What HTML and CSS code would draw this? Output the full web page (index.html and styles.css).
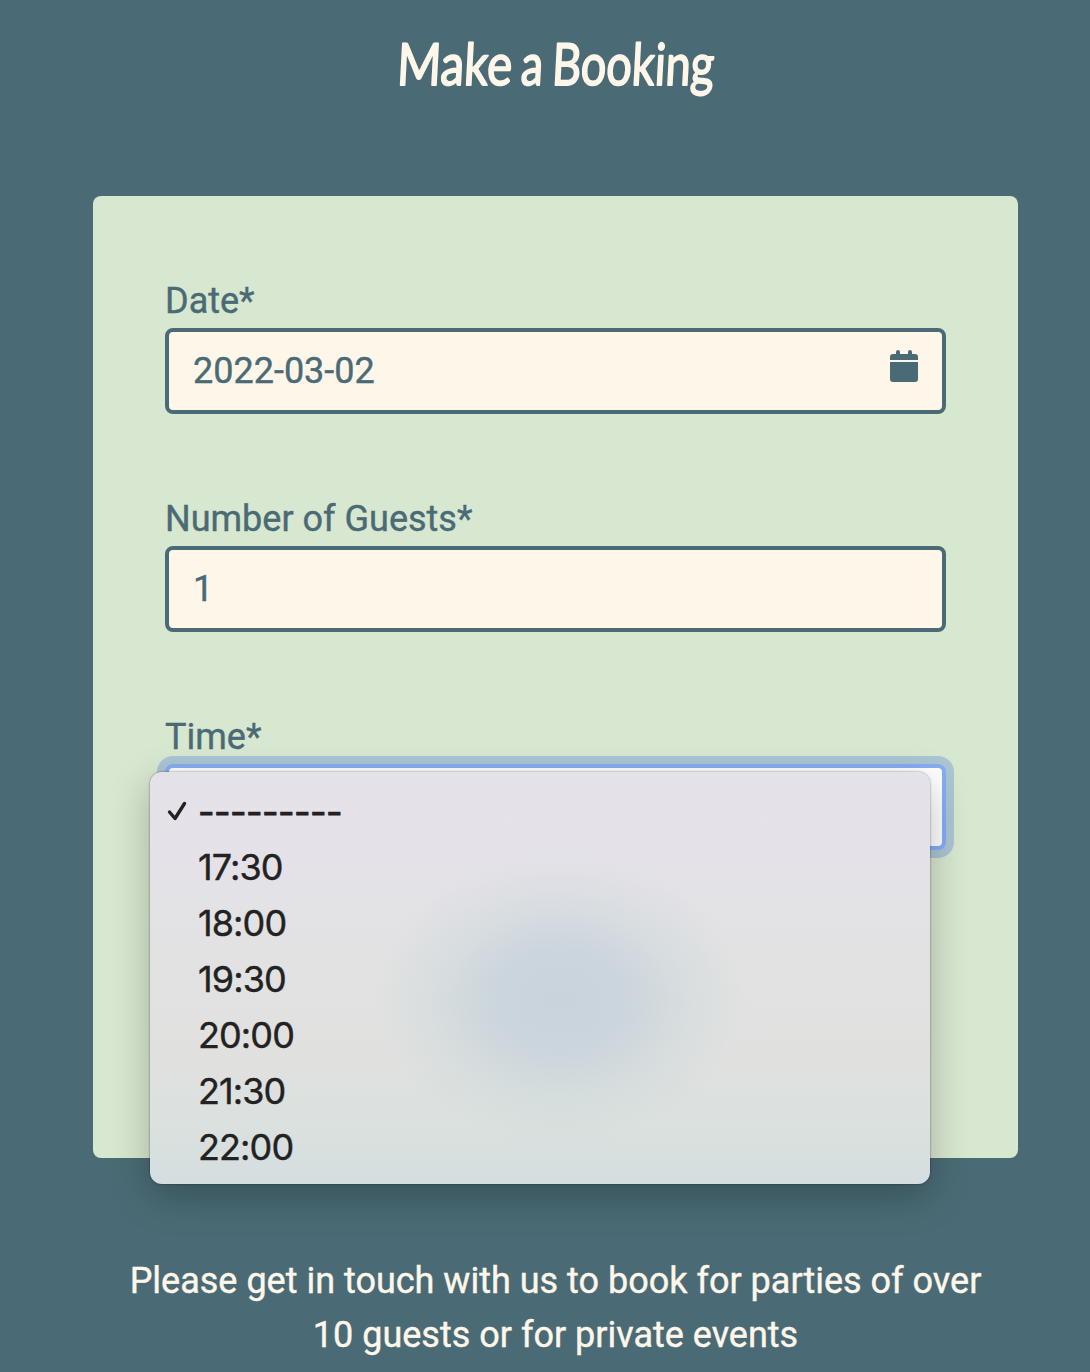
FILE: index.html
```html
<!DOCTYPE html>
<html lang="en">
<head>
<meta charset="utf-8">
<title>Make a Booking</title>
<link rel="stylesheet" href="styles.css">
</head>
<body>
<main class="page">
  <h1 class="title">
    <svg class="title-art" width="330" height="80" viewBox="0 0 330 80">
      <text class="title-text" y="52" transform="skewX(-3)"><tspan x="8" textLength="115" lengthAdjust="spacingAndGlyphs">Make</tspan><tspan x="132" textLength="22" lengthAdjust="spacingAndGlyphs">a</tspan><tspan x="163" textLength="162" lengthAdjust="spacingAndGlyphs">Booking</tspan></text>
    </svg>
  </h1>
  <form class="card">
    <div class="field">
      <label class="label" for="date">Date*</label>
      <div class="control">
        <input class="value" id="date" type="text" value="2022-03-02">
        <svg class="calendar" width="28" height="32" viewBox="0 0 28 32" aria-hidden="true">
          <path d="M0 10V7a3 3 0 0 1 3-3h3V2a2 2 0 0 1 4 0v2h8V2a2 2 0 0 1 4 0v2h3a3 3 0 0 1 3 3v3zM0 12h28v17a3 3 0 0 1-3 3H3a3 3 0 0 1-3-3z"/>
        </svg>
      </div>
    </div>
    <div class="field">
      <label class="label" for="guests">Number of Guests*</label>
      <div class="control"><input class="value" id="guests" type="text" value="1"></div>
    </div>
    <div class="field time-field">
      <span class="label">Time*</span>
      <div class="control focused"></div>
      <ul class="menu">
        <li class="option selected">
          <svg class="check" width="20" height="20" viewBox="0 0 20 20" aria-hidden="true"><path d="M2.5 11l5.5 6.5L17.5 2.5"/></svg>
          <span class="dashes">---------</span>
        </li>
        <li class="option">17:30</li>
        <li class="option">18:00</li>
        <li class="option">19:30</li>
        <li class="option">20:00</li>
        <li class="option">21:30</li>
        <li class="option">22:00</li>
      </ul>
    </div>
  </form>
  <p class="note">Please get in touch with us to book for parties of over<br>10 guests or for private events</p>
</main>
</body>
</html>
```
FILE: styles.css
```css
* {
  box-sizing: border-box;
}

body {
  margin: 0;
  background: #4a6b75;
  color: #fff6ea;
  font: 36px/54px Roboto, sans-serif;
  -webkit-text-stroke: 0.4px;
}

.page {
  height: 1372px;
  padding: 33px 72px 0 93px;
  overflow: hidden;
}

.title {
  display: flex;
  justify-content: center;
  height: 163px;
  margin: 0;
}

.title-art {
  overflow: visible;
}

.title-text {
  font: 400 58px Lato, sans-serif;
  fill: #fff6ea;
  stroke: #fff6ea;
  stroke-width: 1.8px;
  stroke-linejoin: round;
}

.card {
  display: flex;
  flex-direction: column;
  gap: 78px;
  height: 962px;
  padding: 78px 72px;
  border-radius: 8px;
  background: #d8e7d0;
}

.label {
  display: block;
  color: #4a6b75;
}

.control {
  display: flex;
  align-items: center;
  justify-content: space-between;
  height: 86px;
  padding: 0 24px;
  border: 4px solid #4a6b75;
  border-radius: 8px;
  background: #fff6ea;
}

.value {
  flex: 1;
  min-width: 0;
  padding: 0;
  border: 0;
  outline: 0;
  background: none;
  color: #4a6b75;
  font: inherit;
}

.calendar {
  margin-bottom: 10px;
  fill: #4a6b75;
}

.focused {
  border-color: #86aef3;
  background: #fff;
  box-shadow: 0 0 0 8px #abc5d2;
}

.time-field {
  position: relative;
}

/* Open option list, floating over the select and the card edge */
.menu {
  position: absolute;
  top: 62px;
  left: -15px;
  width: 780px;
  height: 412px;
  margin: 0;
  padding: 11px 18px 0 48px;
  border-radius: 12px;
  background:
    radial-gradient(ellipse 185px 145px at 410px 228px, #c8d3db 0%, rgba(200, 211, 220, 0.85) 35%, rgba(205, 216, 220, 0.5) 65%, rgba(212, 224, 220, 0) 100%),
    linear-gradient(#e5e1e9 0%, #e4e2e8 23%, #e1e2e1 52%, #e0e1df 70%, #dae1de 86%, #d4dde0 100%);
  box-shadow: 0 0 2px rgba(0, 0, 0, 0.55), 0 12px 38px rgba(0, 0, 0, 0.25);
  color: #222;
  font-family: Inter, sans-serif;
  list-style: none;
}

.option {
  height: 56px;
  line-height: 56px;
  letter-spacing: -0.9px;
}

.selected {
  display: flex;
  align-items: center;
}

.check {
  flex: none;
  margin: 0 13px 0 -31px;
  fill: none;
  stroke: #222;
  stroke-width: 3.4;
  stroke-linecap: round;
  stroke-linejoin: round;
}

.dashes {
  margin-top: 2px;
  margin-left: -2px;
  letter-spacing: -0.55px;
  -webkit-text-stroke: 0.8px;
}

.note {
  margin: 96px 0 0;
  text-align: center;
}
```
